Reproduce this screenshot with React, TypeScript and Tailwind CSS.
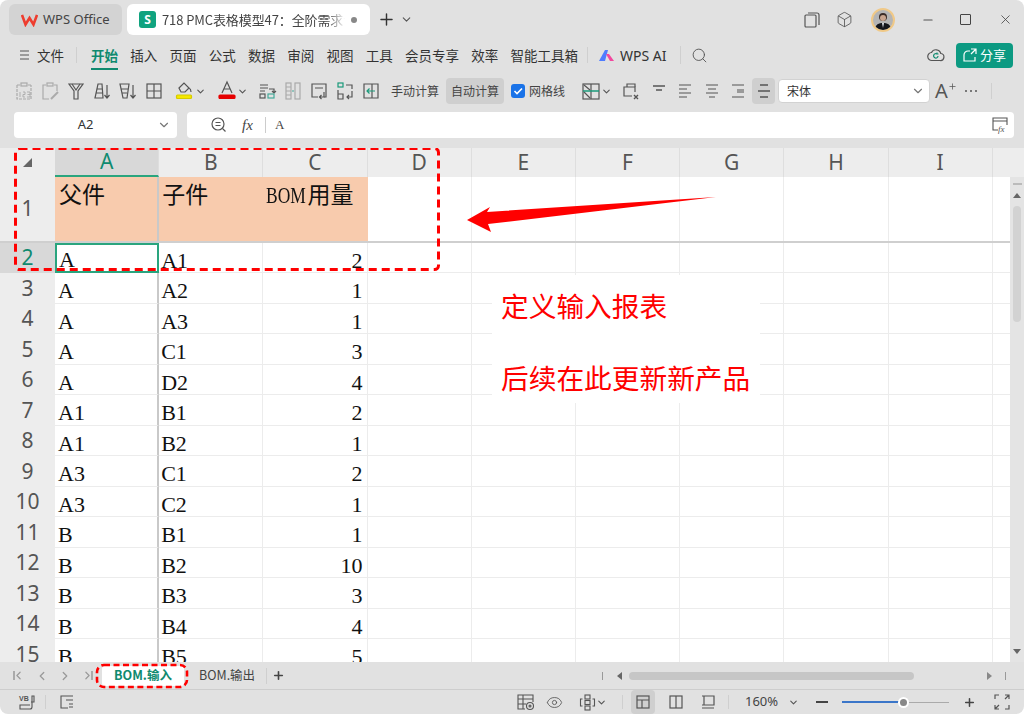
import type { ReactNode } from 'react';
import { ChevronDown, Plus, Minus, X, Search, Eye, Box, ChevronLeft, ChevronRight } from 'lucide-react';

const cols = ['A', 'B', 'C', 'D', 'E', 'F', 'G', 'H', 'I'];
const rows = [
  ['A', 'A1', '2'], ['A', 'A2', '1'], ['A', 'A3', '1'], ['A', 'C1', '3'], ['A', 'D2', '4'],
  ['A1', 'B1', '2'], ['A1', 'B2', '1'], ['A3', 'C1', '2'], ['A3', 'C2', '1'], ['B', 'B1', '1'],
  ['B', 'B2', '10'], ['B', 'B3', '3'], ['B', 'B4', '4'], ['B', 'B5', '5'],
];
const menus = ['插入', '页面', '公式', '数据', '审阅', '视图', '工具', '会员专享', '效率', '智能工具箱'];

function Ico({ children, size = 20, className = '' }: { children: ReactNode; size?: number; className?: string }) {
  return (
    <svg width={size} height={size} viewBox="0 0 20 20" fill="none" stroke="#555" strokeWidth="1.2" className={className}>
      {children}
    </svg>
  );
}

function Slot({ children, w = 'w-[26px]' }: { children: ReactNode; w?: string }) {
  return <div className={`${w} h-[26px] flex items-center justify-center shrink-0`}>{children}</div>;
}

const Caret = () => <ChevronDown size={11} strokeWidth={2.4} color="#555" className="shrink-0" />;

function Toolbar() {
  return (
    <div className="h-[30px] mt-[6px] flex items-center pl-[11px] text-[12px] text-[#444]">
      <Slot>
        <Ico><path d="M3 4h3M14 4h3M3 4v14h14V4" stroke="#aaa" strokeDasharray="3 1" /><rect x="7" y="2" width="6" height="3" stroke="#aaa" /><path d="M6 11v5M9 11h2v2.500H9V16h2M13 11h3v5h-3M13.500 13.500H16" stroke="#aaa" strokeWidth="0.9" /></Ico>
      </Slot>
      <Slot>
        <Ico><path d="M9 18H3V4h3M14 4h3v6" stroke="#aaa" /><rect x="7" y="2" width="6" height="3" stroke="#aaa" /><path d="M11 18l7-7" stroke="#aaa" strokeWidth="2" /></Ico>
      </Slot>
      <Slot>
        <Ico><path d="M3 3h14l-5 7v8H8v-8L3 3z" /><path d="M6 3l4 6 4-6" /></Ico>
      </Slot>
      <Slot>
        <Ico><path d="M3 17L6 3h4l1 14H3zM4 12h7M5 8h5" /><path d="M15 4v13M12.500 14l2.500 3 2.500-3" /></Ico>
      </Slot>
      <Slot>
        <Ico><path d="M2 3h9l-2 14H5L2 3zM3 8h7M4 12h5" /><path d="M15 4v13M12.500 14l2.500 3 2.500-3" /></Ico>
      </Slot>
      <Slot>
        <Ico><rect x="3" y="3" width="14" height="14" /><path d="M10 3v14M3 10h14" /></Ico>
      </Slot>
      <div className="w-[41px] flex items-center shrink-0 ml-[5px]">
        <svg width="20" height="22" viewBox="0 0 20 22" fill="none" stroke="#555" strokeWidth="1.2" className="ml-[3px]">
          <path d="M4 8l5-5 5 5-4 4H6L4 8zM14 8c2 1 2 3 2 4" />
          <rect x="1.500" y="15" width="15" height="3.500" rx="1" fill="#f5e800" stroke="#d6cb00" />
        </svg>
        <Caret />
      </div>
      <div className="w-[31px] flex items-center shrink-0 ml-[4px]">
        <svg width="20" height="22" viewBox="0 0 20 22" fill="none" stroke="#555" strokeWidth="1.2">
          <path d="M5 13l5-11 5 11M7 9h6" />
          <rect x="2" y="15" width="16" height="3.500" rx="1" fill="#e60000" stroke="#e60000" />
        </svg>
        <Caret />
      </div>
      <div className="w-[6px] shrink-0" />
      <Slot>
        <Ico><path d="M3 4h8M3 7h8M3 10h5" /><path d="M12 8h5v4M15 10l2 2 2-2" /><rect x="3" y="13" width="5" height="4" /><rect x="11" y="13" width="6" height="4" stroke="#4a9" /></Ico>
      </Slot>
      <Slot>
        <Ico><g stroke="#aaa"><rect x="3" y="2" width="5" height="16" /><rect x="12" y="2" width="5" height="16" /><path d="M3 6h5M3 10h5M3 14h5" /><path d="M9 10h2" stroke="#4a9" /></g></Ico>
      </Slot>
      <Slot>
        <Ico><path d="M9 16H3V3h14v13h-2M6 7h8" /><path d="M15 11v5h-4M12.500 14l-2 2 2 2" /></Ico>
      </Slot>
      <Slot>
        <Ico><rect x="3" y="2" width="5" height="4" stroke="#1a9a7a" /><path d="M11 4h6v4M3 9v9h5v-5H3" /><path d="M17 10v6h-5M14 14l-2 2 2 2" /></Ico>
      </Slot>
      <Slot>
        <Ico><path d="M11 3H3v14h8M11 3h6v14h-6V3" /><path d="M14 10H6M8.500 7.500L6 10l2.500 2.500" stroke="#1a9a7a" /></Ico>
      </Slot>
      <span className="ml-[7px] w-[50px] shrink-0 whitespace-nowrap">手动计算</span>
      <span className="ml-[5px] w-[58px] h-[26px] shrink-0 rounded-[4px] bg-[#cfcfcf] flex items-center justify-center whitespace-nowrap">自动计算</span>
      <div className="ml-[7px] w-[14px] h-[14px] rounded-[3px] bg-[#1a73e8] flex items-center justify-center shrink-0">
        <svg width="10" height="10" viewBox="0 0 10 10" fill="none" stroke="#fff" strokeWidth="1.600"><path d="M1.500 5l2.500 2.500 5-5" /></svg>
      </div>
      <span className="ml-[4px] w-[38px] shrink-0 whitespace-nowrap">网格线</span>
      <div className="ml-[14px] w-[32px] flex items-center shrink-0">
        <Ico><rect x="2" y="3" width="16" height="15" /><path d="M10 3v15" /><path d="M2 10h16" stroke="#1a9a7a" strokeWidth="1.500" /><path d="M3 4l6 5M3 11l6 6" /></Ico>
        <Caret />
      </div>
      <Slot w="w-[28px] ml-[4px]">
        <Ico><path d="M11 15H3V6h11v5" /><path d="M6 6V3h8v3" /><path d="M13 14l4 4M17 14l-4 4" strokeWidth="1.400" /></Ico>
      </Slot>
      <Slot w="w-[27px]">
        <Ico><path d="M4 5h12M7 9h6" strokeWidth="1.400" /></Ico>
      </Slot>
      <Slot w="w-[26px]">
        <Ico><path d="M4 4h12M4 8h8M4 12h12M4 16h8" /></Ico>
      </Slot>
      <Slot w="w-[27px]">
        <Ico><path d="M4 4h12M6 8h8M4 12h12M7 16h6" /></Ico>
      </Slot>
      <Slot w="w-[26px]">
        <Ico><path d="M4 4h12M9 9h7M9 11h7M4 16h12" /></Ico>
      </Slot>
      <div className="w-[23px] h-[26px] ml-[1px] rounded-[4px] bg-[#cfcfcf] flex items-center justify-center shrink-0">
        <Ico><path d="M6 4h8M4 10h12M6 16h8" strokeWidth="1.400" /></Ico>
      </div>
      <div className="ml-[3px] w-[152px] h-[24px] rounded-[4px] bg-white border border-[#d2d2d2] flex items-center justify-between pl-[8px] pr-[4px] shrink-0">
        <span className="text-[12px] text-[#333]">宋体</span>
        <ChevronDown size={14} color="#777" />
      </div>
      <div className="w-[30px] ml-[1px] flex items-center justify-center shrink-0">
        <span className="text-[20px] leading-none text-[#555] font-['Noto_Sans',sans-serif]">A</span>
        <Plus size={9} color="#555" className="-mt-[10px]" />
      </div>
      <div className="w-[20px] flex items-center justify-center gap-[3px] shrink-0">
        <span className="w-[2px] h-[2px] rounded-full bg-[#555]" />
        <span className="w-[2px] h-[2px] rounded-full bg-[#555]" />
        <span className="w-[2px] h-[2px] rounded-full bg-[#555]" />
      </div>
      <div className="ml-[10px] w-px h-[16px] bg-[#cfcfcf] shrink-0" />
    </div>
  );
}

function Sheet() {
  const cell = 'w-[104.2px] shrink-0 border-r border-b border-[#ececec] overflow-hidden';
  const rowHead = "w-[55px] shrink-0 flex items-center justify-center text-[21px] font-['Noto_Sans',sans-serif]";
  return (
    <div className="flex h-[514px] mt-[10px] bg-white">
      <div className="relative flex-1 min-w-0 overflow-hidden font-['Liberation_Serif','Noto_Sans_CJK_SC',serif] text-[22px] text-[#111]">
        <div className="h-[29px] flex bg-[#ededed] text-[#555] text-[21px] font-['Noto_Sans',sans-serif]">
          <div className="w-[55px] shrink-0 flex items-center justify-center">
            <svg width="11" height="11" viewBox="0 0 11 11"><path d="M10 1v9H1z" fill="#666" /></svg>
          </div>
          {cols.map((c, i) => (
            <div key={c} className={`w-[104.2px] shrink-0 flex items-center justify-center border-r border-[#dedede] ${i === 0 ? 'bg-[#d8d8d8] text-[#0f8a6f] border-b-2 border-b-[#2aa57e]' : ''}`}>{c}</div>
          ))}
          <div className="flex-1" />
        </div>
        <div className="h-[66px] flex border-b-2 border-[#cfcfcf]">
          <div className={`${rowHead} bg-[#ededed] text-[#555]`}>1</div>
          <div className="w-[104.2px] shrink-0 bg-[#f8cbad] border-r-2 border-[#c9c9c9] pl-[4px] pt-[3px] text-[23px] leading-[32px]">父件</div>
          <div className="w-[104.2px] shrink-0 bg-[#f8cbad] pl-[3px] pt-[3px] text-[23px] leading-[32px]">子件</div>
          <div className="w-[104.2px] shrink-0 bg-[#f8cbad] pl-[3px] pt-[3px] text-[23px] leading-[32px] whitespace-nowrap flex items-start">
            <span className="inline-block w-[41px] origin-left scale-x-[0.76]">BOM</span>用量
          </div>
          {cols.slice(3).map((c) => <div key={c} className="w-[104.2px] shrink-0 border-r border-[#ececec]" />)}
        </div>
        {rows.map((r, i) => (
          <div key={i} className={`flex ${i === 0 ? 'h-[30px]' : 'h-[30.5px]'}`}>
            <div className={`${rowHead} ${i === 0 ? 'bg-[#d8d8d8] text-[#0f8a6f]' : 'bg-[#ededed] text-[#555]'}`}>{i + 2}</div>
            <div className={`${cell} leading-[28px] pl-[3px] pt-[4px] border-r-2 border-r-[#c9c9c9] ${i === 0 ? 'border-2! border-[#2aa57e]! leading-[26px]! pt-[2px]! pl-[2px]!' : ''}`}>{r[0]}</div>
            <div className={`${cell} leading-[28px] pl-[2px] pt-[4px]`}>{r[1]}</div>
            <div className={`${cell} leading-[28px] pr-[4px] pt-[4px] text-right`}>{r[2]}</div>
            {cols.slice(3).map((c) => <div key={c} className={cell} />)}
            <div className="flex-1 border-b border-[#ececec]" />
          </div>
        ))}

        {/* red notes drawn over the sheet */}
        <div className="absolute left-[492px] top-[127px] w-[268px] h-[128px] bg-white text-[#f00] text-[27.7px] font-['Noto_Sans_CJK_SC',sans-serif] leading-[32px] pl-[9px] pt-[14px]">
          <div className="h-[72px]">定义输入报表</div>
          <div>后续在此更新新产品</div>
        </div>
        <svg className="absolute left-0 top-0 pointer-events-none" width="1010" height="514" fill="none">
          <rect x="15.500" y="0.500" width="423" height="121" rx="4" stroke="#f00" strokeWidth="3" strokeDasharray="8 5" />
          <polygon points="716,49 487,64 490,59 467,72 491,84 488,76" fill="#f00" stroke="none" />
        </svg>
      </div>
      <div className="w-[14px] bg-[#ededed] pt-[29px] shrink-0">
        <div className="h-full bg-[#e4e4e4] relative">
          <div className="mx-auto pt-[6px] w-[9px] border-b-2 border-[#bbb]" />
          <div className="mx-auto mt-[8px] w-0 h-0 border-x-[4px] border-x-transparent border-b-[5px] border-b-[#666]" />
          <div className="mx-auto mt-[8px] w-[8px] h-[116px] rounded-full bg-[#d2d2d2]" />
          <div className="absolute bottom-[8px] left-[3px] w-0 h-0 border-x-[4px] border-x-transparent border-t-[5px] border-t-[#666]" />
        </div>
      </div>
    </div>
  );
}

export default function App() {
  return (
    <div className="w-[1024px] h-[714px] overflow-hidden bg-white">
      <div className="w-full h-full rounded-[8px] overflow-hidden bg-[#e1e1e1] font-['Noto_Sans_CJK_SC',sans-serif] text-[#333]">
        {/* title bar */}
        <div className="h-[40px] pt-[4px] flex items-start pl-[9px]">
          <div className="w-[113px] h-[31px] rounded-[6px] bg-[#d3d3d3] flex items-center pl-[12px] gap-[5px] font-['Noto_Sans','Noto_Sans_CJK_SC',sans-serif] text-[13px] text-[#444]">
            <svg width="17" height="14" viewBox="0 0 17 14" fill="none" stroke="#ee3d2f" strokeWidth="2.600"><path d="M1 2l3.500 9.500L8.500 5l4 6.500L16 2" /></svg>
            WPS Office
          </div>
          <div className="ml-[5px] w-[243px] h-[31px] rounded-[6px] bg-white flex items-center pl-[12px] text-[13px] tracking-[-0.1px] text-[#444]">
            <div className="w-[17px] h-[17px] rounded-[3px] bg-[#10a37f] text-white text-[12px] font-bold flex items-center justify-center font-['Noto_Sans',sans-serif]">S</div>
            <span className="ml-[6px] w-[183px] overflow-hidden whitespace-nowrap [mask-image:linear-gradient(to_right,black_90%,transparent)]">718 PMC表格模型47：全阶需求计算</span>
            <span className="ml-[6px] w-[6px] h-[6px] rounded-full bg-[#888]" />
          </div>
          <Plus size={19} color="#333" strokeWidth={1.800} className="ml-[7px] mt-[6px]" />
          <ChevronDown size={13} color="#555" strokeWidth={2} className="ml-[4px] mt-[9px]" />
          <div className="ml-auto flex items-center h-[31px] pr-[11px]">
            <svg width="16" height="16" viewBox="0 0 16 16" fill="none" stroke="#555" strokeWidth="1.200"><rect x="1" y="3" width="11" height="12" rx="1" /><path d="M4 1h9a2 2 0 012 2v10" /></svg>
            <Box size={17} color="#555" strokeWidth={1.200} className="ml-[16px]" />
            <div className="ml-[18px] w-[24px] h-[24px] rounded-full border-2 border-[#f0c988] bg-[#b5b5b5] overflow-hidden">
              <svg width="20" height="20" viewBox="0 0 20 20"><circle cx="10" cy="7" r="4" fill="#3a2c28" /><circle cx="10" cy="8" r="3" fill="#c9a58f" /><path d="M2 20c0-6 4-7 8-7s8 1 8 7z" fill="#14161c" /><path d="M9 13h2l-1 5z" fill="#dfe3ea" /></svg>
            </div>
            <Minus size={14} color="#555" className="ml-[26px]" />
            <div className="ml-[25px] w-[11px] h-[11px] border border-[#444] rounded-[1px]" />
            <X size={15} color="#444" strokeWidth={1.300} className="ml-[27px]" />
          </div>
        </div>

        {/* menu row */}
        <div className="h-[30px] flex items-center text-[13.5px] text-[#333]">
          <svg width="9" height="10" viewBox="0 0 9 10" stroke="#555" className="ml-[20px]"><path d="M0 1h9M0 5h9M0 9h9" /></svg>
          <span className="ml-[8px]">文件</span>
          <div className="ml-[12px] w-px h-[16px] bg-[#cfcfcf]" />
          <div className="ml-[14px] relative h-[30px] flex items-center">
            <span className="font-bold text-[#0f8a6f]">开始</span>
            <div className="absolute left-0 right-0 bottom-0 h-[2px] bg-[#0f8a6f]" />
          </div>
          <div className="ml-[12.25px] flex gap-[12.25px]">
            {menus.map((m) => <span key={m} className="whitespace-nowrap">{m}</span>)}
          </div>
          <div className="ml-[9px] w-px h-[16px] bg-[#cfcfcf]" />
          <svg width="16" height="13" viewBox="0 0 16 13" className="ml-[11px]">
            <path d="M0 12L6 1h3l-3 11z" fill="#4f7cff" /><path d="M7 5l3 0 5 7h-4z" fill="#f2489e" />
          </svg>
          <span className="ml-[5px] font-['Noto_Sans',sans-serif] text-[14px]">WPS AI</span>
          <div className="ml-[13px] w-px h-[18px] bg-[#cfcfcf]" />
          <Search size={17} color="#555" strokeWidth={1.300} className="ml-[10px]" />
          <svg width="18" height="16" viewBox="0 0 18 16" fill="none" stroke="#555" strokeWidth="1.200" className="ml-auto">
            <path d="M5 13.500a4 4 0 01-.5-8 5 5 0 019.300 1 3.500 3.500 0 01-.8 7z" />
            <path d="M11 9a2.200 2.200 0 11-1-2M10 5.500V7h1.500" stroke="#0f8a6f" />
          </svg>
          <div className="ml-[11px] mr-[11px] w-[57px] h-[25px] rounded-[4px] bg-[#0c9a82] text-white flex items-center justify-center gap-[3px] text-[13px]">
            <svg width="14" height="14" viewBox="0 0 14 14" fill="none" stroke="#fff" strokeWidth="1.200"><path d="M7 3H5a4 4 0 00-4 4v6h11V9M8 1h5v5M13 1L8 6" /></svg>
            分享
          </div>
        </div>

        <Toolbar />

        {/* formula bar */}
        <div className="h-[26px] mt-[6px] flex pl-[14px] pr-[10px] gap-[10px] text-[12px]">
          <div className="w-[163px] rounded-[4px] bg-white flex items-center relative">
            <span className="w-[143px] text-center font-['Noto_Sans',sans-serif] text-[13px] text-[#333]">A2</span>
            <ChevronDown size={14} color="#777" />
          </div>
          <div className="flex-1 rounded-[4px] bg-white flex items-center">
            <svg width="16" height="16" viewBox="0 0 16 16" fill="none" stroke="#555" strokeWidth="1.200" className="ml-[24px]"><circle cx="7" cy="7" r="6" /><path d="M4.500 5.500h5M4.500 8.500h5M11.500 11.500l3 3" /></svg>
            <span className="ml-[15px] font-['Liberation_Serif',serif] italic text-[15px] text-[#444] w-[20px]">fx</span>
            <div className="ml-[3px] w-px h-[16px] bg-[#ccc]" />
            <span className="ml-[9px] font-['Liberation_Serif',serif] text-[13px] text-[#444]">A</span>
            <div className="ml-auto mr-[5px] w-[19px] h-[18px] flex items-center justify-center">
              <svg width="18" height="18" viewBox="0 0 18 18" fill="none" stroke="#555" strokeWidth="1.100">
                <path d="M7 14H2V2h14v7M2 5h14" />
                <text x="7" y="16" fontSize="9" fontStyle="italic" fill="#555" stroke="none" fontFamily="Liberation Serif">fx</text>
              </svg>
            </div>
          </div>
        </div>

        <Sheet />

        {/* sheet tabs */}
        <div className="h-[28px] relative flex items-center border-b border-[#cdcdcd] text-[12.5px]">
          <div className="flex items-center ml-[13px] text-[#9a9a9a]">
            <div className="w-[14px] flex items-center"><div className="w-[2px] h-[9px] bg-[#aaa]" /><ChevronLeft size={13} strokeWidth={2.200} className="-ml-[3px]" /></div>
            <ChevronLeft size={14} strokeWidth={2.200} className="ml-[8px]" />
            <ChevronRight size={14} strokeWidth={2.200} className="ml-[9px]" />
            <div className="ml-[9px] w-[14px] flex items-center"><ChevronRight size={13} strokeWidth={2.200} /><div className="w-[2px] h-[9px] bg-[#aaa] -ml-[3px]" /></div>
          </div>
          <div className="ml-[7px] w-[82px] h-[20px] bg-white flex items-center justify-center font-bold text-[#0f8a6f] rounded-[3px]">BOM.输入</div>
          <span className="ml-[15px] text-[#444]">BOM.输出</span>
          <div className="ml-[11px] w-px h-[16px] bg-[#cfcfcf]" />
          <Plus size={13} strokeWidth={3} color="#444" className="ml-[5px]" />
          <div className="ml-auto flex items-center pr-[18px]">
            <div className="w-px h-[8px] bg-[#999]" />
            <div className="ml-[14px] w-0 h-0 border-y-[4px] border-y-transparent border-r-[5px] border-r-[#666]" />
            <div className="ml-[7px] w-[285px] h-[8px] rounded-full bg-[#c6c6c6]" />
            <div className="ml-[73px] w-0 h-0 border-y-[4px] border-y-transparent border-l-[5px] border-l-[#888]" />
            <div className="ml-[13px] w-px h-[8px] bg-[#999]" />
          </div>
          <svg className="absolute left-[94px] top-[1px] pointer-events-none" width="96" height="26" fill="none">
            <rect x="3" y="2" width="90" height="22" rx="7" stroke="#f00" strokeWidth="2.600" strokeDasharray="6 3.500" />
          </svg>
        </div>

        {/* status bar */}
        <div className="h-[24px] flex items-center">
          <svg width="18" height="16" viewBox="0 0 18 16" fill="none" stroke="#555" strokeWidth="1.100" className="ml-[18px]">
            <path d="M13 8h3V2h-2v11a2 2 0 01-2 2H2v-4h10" />
            <text x="1" y="7" fontSize="7" fontWeight="700" fill="#555" stroke="none" fontFamily="Liberation Sans">VB</text>
          </svg>
          <div className="ml-[9px] w-px h-[14px] bg-[#cfcfcf]" />
          <svg width="14" height="14" viewBox="0 0 14 14" fill="none" stroke="#555" strokeWidth="1.100" className="ml-[14px]"><path d="M13 1H1v12h7M6 5h7M9 9h4M9 12h4" /></svg>
          <svg width="18" height="18" viewBox="0 0 18 18" fill="none" stroke="#555" strokeWidth="1.100" className="ml-[443px]">
            <path d="M8 16H1V2h15v7M1 6h15M1 11h8M6 2v14" /><circle cx="13" cy="13" r="3.500" /><circle cx="13" cy="13" r="1" />
          </svg>
          <Eye size={17} color="#555" strokeWidth={1.200} className="ml-[11px]" />
          <svg width="17" height="17" viewBox="0 0 17 17" fill="none" stroke="#555" strokeWidth="1.100" className="ml-[16px]">
            <rect x="6" y="1" width="5" height="4" /><rect x="6" y="12" width="5" height="4" /><rect x="6" y="6.500" width="5" height="4" /><path d="M3.500 5H1.500v7h2M13.500 5h2v7h-2" />
          </svg>
          <Caret />
          <div className="ml-[15px] w-px h-[14px] bg-[#cfcfcf]" />
          <div className="ml-[8px] w-[24px] h-[24px] rounded-[4px] bg-[#cfcfcf] flex items-center justify-center">
            <svg width="14" height="14" viewBox="0 0 14 14" fill="none" stroke="#555" strokeWidth="1.200"><rect x="1" y="1" width="12" height="12" /><path d="M1 5h12M6 5v8" /></svg>
          </div>
          <svg width="14" height="14" viewBox="0 0 14 14" fill="none" stroke="#555" strokeWidth="1.200" className="ml-[14px]"><rect x="1" y="1" width="12" height="12" /><path d="M7 1v12" /></svg>
          <svg width="14" height="14" viewBox="0 0 14 14" fill="none" stroke="#555" strokeWidth="1.200" className="ml-[18px]"><path d="M1 1h12v9H1M1 13h12M3 1v9" /></svg>
          <div className="ml-[13px] w-px h-[14px] bg-[#cfcfcf]" />
          <span className="ml-[16px] w-[33px] font-['Noto_Sans',sans-serif] text-[13px] text-[#444]">160%</span>
          <div className="ml-[10px]"><Caret /></div>
          <div className="ml-[17px] w-[12px] h-[2px] bg-[#444]" />
          <div className="ml-[14px] w-[107px] h-[1px] bg-[#aaa] relative">
            <div className="w-[61px] h-[2px] -mt-[0.5px] bg-[#3b76c9]" />
            <div className="absolute left-[56px] -top-[5px] w-[11px] h-[11px] rounded-full bg-[#888] border-2 border-white" />
          </div>
          <Plus size={13} strokeWidth={2.800} color="#444" className="ml-[14px]" />
          <svg width="16" height="16" viewBox="0 0 16 16" fill="none" stroke="#555" strokeWidth="1.200" className="ml-[18px]">
            <path d="M1 5V1h4M15 11v4h-4M11 1h4v4M15 1l-4 4M1 11v4h4M1 15l4-4" />
          </svg>
        </div>
      </div>
    </div>
  );
}
